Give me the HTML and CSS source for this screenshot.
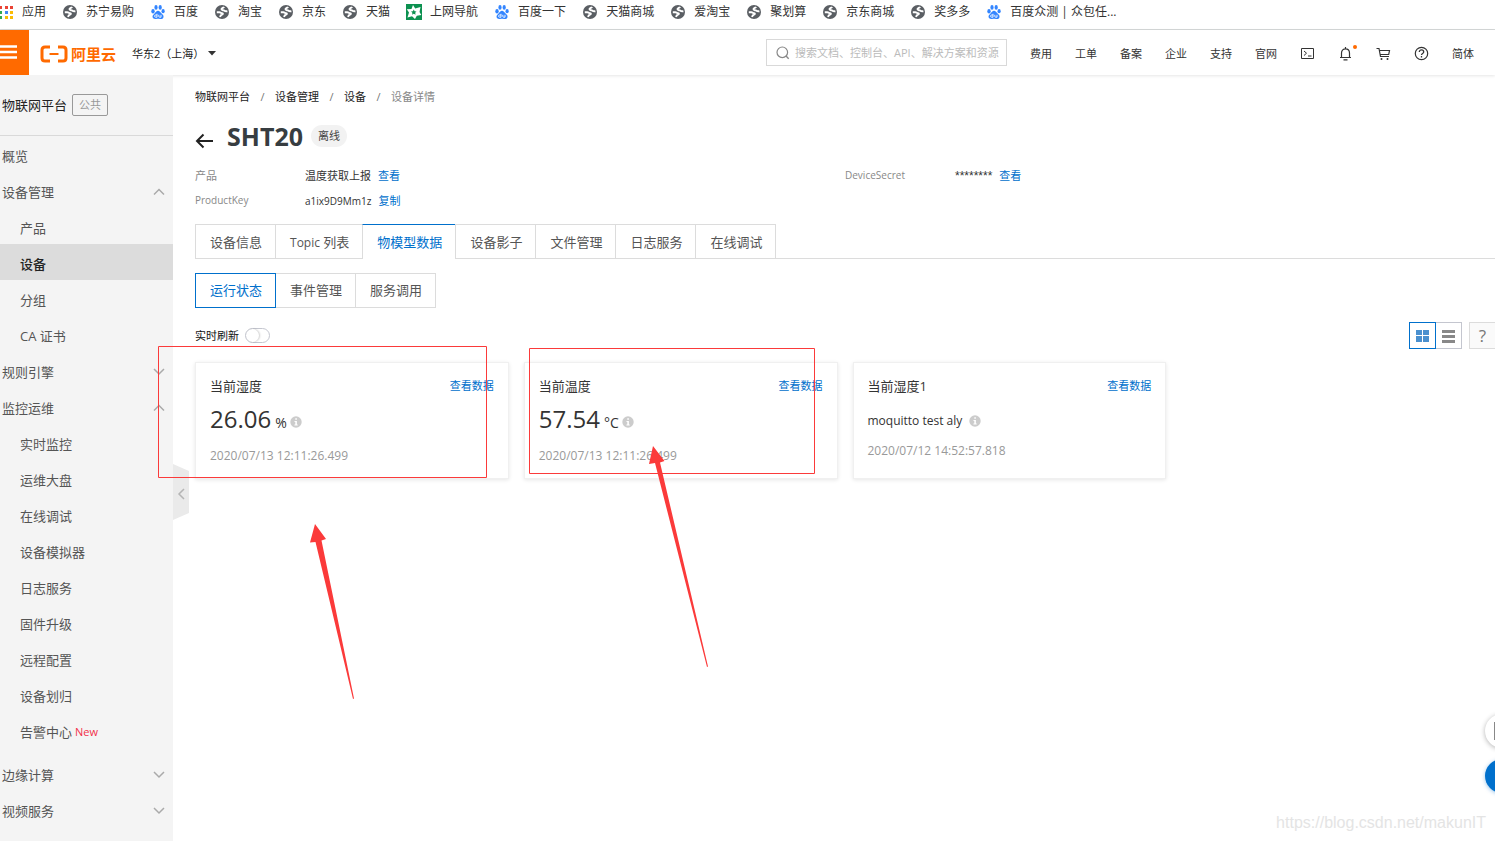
FILE: index.html
```html
<!DOCTYPE html>
<html lang="zh-CN">
<head>
<meta charset="utf-8">
<title>设备详情</title>
<link rel="stylesheet" href="styles.css">
</head>
<body>
<svg class="defs" aria-hidden="true">
  <symbol id="globe" viewBox="0 0 16 16">
    <circle cx="8" cy="8" r="7" fill="#5a5e63"/>
    <path d="M2.800 8.200h2.500c1.400 0 1.400 1 2.700 1.100 1.200.1 1.100 1 .1 1.200-1.100.3-1.500 1-2.200 2.400" fill="none" stroke="#fff" stroke-width="2"/>
    <path d="M10 2.800c-.4 1.100-2.400 1.100-2.500 2.400-.1 1.200 1.800.7 2.600 1.300.9.700 1.400 1.100 3.300.7" fill="none" stroke="#fff" stroke-width="2"/>
  </symbol>
  <symbol id="paw" viewBox="0 0 16 16">
    <g fill="#3385ff">
      <ellipse cx="3" cy="7.200" rx="1.700" ry="2.200"/><ellipse cx="6" cy="3.400" rx="1.600" ry="2.300"/>
      <ellipse cx="10.200" cy="3.400" rx="1.600" ry="2.300"/><ellipse cx="13.100" cy="7.200" rx="1.600" ry="2.100"/>
      <path d="M8 6.800c1.600 0 2.300 1.500 3.600 2.700 1.500 1.300 2.300 2.300 1.800 3.900-.5 1.700-2.200 1.700-3.500 1.500-1.200-.2-2.600-.2-3.800 0-1.400.2-3.100.1-3.500-1.600-.4-1.600.6-2.600 1.900-3.800C5.700 8.300 6.400 6.800 8 6.800z"/>
    </g>
    <path d="M7 9.800v3.400H5.600c-1.400 0-1.400-2.200 0-2.200H7M8.800 10.800v1.500c0 .7.300.9.900.9h1.300v-2.400" fill="none" stroke="#fff" stroke-width=".9"/>
  </symbol>
  <symbol id="info" viewBox="0 0 12 12">
    <circle cx="6" cy="6" r="5.700" fill="#ccc"/>
    <path d="M5.300 2.300h1.600v1.500H5.300zM4.500 4.900h2.400v3.500h.8v1H4.400v-1h.9V5.900h-.8z" fill="#fff"/>
  </symbol>
  <symbol id="down" viewBox="0 0 12 8"><path d="M1 1l5 5 5-5" fill="none" stroke="#aaa" stroke-width="1.500"/></symbol>
  <symbol id="up" viewBox="0 0 12 8"><path d="M1 6.500l5-5 5 5" fill="none" stroke="#aaa" stroke-width="1.500"/></symbol>
</svg>

<nav class="bookmarks" aria-label="书签">
  <a href="#"><svg class="apps" viewBox="0 0 14 16"><path d="M0 2h2v3H0zM5 2h3v3H5zM10 2h3v3h-3z" fill="#ea4335"/><path d="M0 7h2v3H0z" fill="#34a853"/><path d="M5 7h3v3H5z" fill="#4285f4"/><path d="M10 7h3v3h-3z" fill="#fbbc05"/><path d="M0 12h2v3H0z" fill="#34a853"/><path d="M5 12h3v3H5zM10 12h3v3h-3z" fill="#fbbc05"/></svg>应用</a>
  <a href="#"><svg><use href="#globe"/></svg>苏宁易购</a>
  <a href="#"><svg><use href="#paw"/></svg>百度</a>
  <a href="#"><svg><use href="#globe"/></svg>淘宝</a>
  <a href="#"><svg><use href="#globe"/></svg>京东</a>
  <a href="#"><svg><use href="#globe"/></svg>天猫</a>
  <a href="#"><svg viewBox="0 0 16 16"><path d="M0 0h16v16H0z" fill="#0c9150"/><path d="M7 1l2.200 3.600L14.500 3l-1 5 1.800 3-4.500.8L9 15l-3-2.800-4.500 1.300L3 8.500.8 5.200 5.500 5z" fill="#fff"/><path d="M7.800 5.500l.8 1.700 1.900.2-1.300 1.400.4 1.900-1.800-.9-1.700.9.300-1.900L5 7.400l1.900-.2z" fill="#0c9150"/></svg>上网导航</a>
  <a href="#"><svg><use href="#paw"/></svg>百度一下</a>
  <a href="#"><svg><use href="#globe"/></svg>天猫商城</a>
  <a href="#"><svg><use href="#globe"/></svg>爱淘宝</a>
  <a href="#"><svg><use href="#globe"/></svg>聚划算</a>
  <a href="#"><svg><use href="#globe"/></svg>京东商城</a>
  <a href="#"><svg><use href="#globe"/></svg>奖多多</a>
  <a href="#"><svg><use href="#paw"/></svg>百度众测 | 众包任...</a>
</nav>

<header class="topbar">
  <button class="menu" aria-label="菜单"><svg viewBox="0 0 29 45"><path d="M0 16.500h17M0 22h17M0 27.500h17" stroke="#fff" stroke-width="2.400"/></svg></button>
  <a class="logo" href="#"><svg viewBox="0 0 28 18"><path d="M10 2H5Q2 2 2 5v8q0 3 3 3h5M18 2h5q3 0 3 3v8q0 3-3 3h-5" fill="none" stroke="#ff6a00" stroke-width="3"/><path d="M9.500 9h9" stroke="#ff6a00" stroke-width="2"/></svg>阿里云</a>
  <button class="region">华东2（上海）<svg viewBox="0 0 8 5"><path d="M0 0h8L4 4.500z" fill="#333"/></svg></button>
  <label class="search"><svg viewBox="0 0 14 14"><circle cx="6.300" cy="6.300" r="5.300" fill="none" stroke="#888" stroke-width="1.200"/><path d="M10 10l2.700 2.700" stroke="#888" stroke-width="1.400"/></svg><input type="text" aria-label="搜索" placeholder="搜索文档、控制台、API、解决方案和资源"></label>
  <nav class="topnav" aria-label="控制台">
    <a href="#">费用</a><a href="#">工单</a><a href="#">备案</a><a href="#">企业</a><a href="#">支持</a><a href="#">官网</a>
    <button aria-label="云命令行"><svg viewBox="0 0 15 15"><path d="M1.500 2.500h12v10h-12zM4 5l2.500 2.200L4 9.500M8 10h3.500" fill="none" stroke="#333"/></svg></button>
    <button class="bell" aria-label="消息"><svg viewBox="0 0 15 15"><path d="M2 11.500h11M3.500 11.500V7c0-5.500 8-5.500 8 0v4.500M7.500 1v2M5.500 13.800h4" fill="none" stroke="#333" stroke-width="1.200"/></svg><span class="dot"></span></button>
    <button aria-label="购物车"><svg viewBox="0 0 15 15"><path d="M.5 2.500H3l1.500 8h8.500M3.500 4.500h10l-.8 4H4.200" fill="none" stroke="#333" stroke-width="1.200"/><circle cx="5.500" cy="13" r="1" fill="#333"/><circle cx="11.500" cy="13" r="1" fill="#333"/></svg></button>
    <button aria-label="帮助"><svg viewBox="0 0 15 15"><circle cx="7.500" cy="7.500" r="6.200" fill="none" stroke="#333" stroke-width="1.200"/><path d="M5.300 6c0-2.800 4.400-2.800 4.400 0 0 1.500-2.200 1.500-2.200 3M7.500 10v1.400" fill="none" stroke="#333" stroke-width="1.300"/></svg></button>
    <a href="#">简体</a>
  </nav>
</header>

<div class="shell">
  <aside class="sidebar">
    <div class="product">物联网平台<span class="tag">公共</span></div>
    <nav class="side" aria-label="物联网平台">
      <a href="#">概览</a>
      <a href="#">设备管理<svg><use href="#up"/></svg></a>
      <a class="sub" href="#">产品</a>
      <a class="sub current" href="#">设备</a>
      <a class="sub" href="#">分组</a>
      <a class="sub" href="#">CA 证书</a>
      <a href="#">规则引擎<svg><use href="#down"/></svg></a>
      <a href="#">监控运维<svg><use href="#up"/></svg></a>
      <a class="sub" href="#">实时监控</a>
      <a class="sub" href="#">运维大盘</a>
      <a class="sub" href="#">在线调试</a>
      <a class="sub" href="#">设备模拟器</a>
      <a class="sub" href="#">日志服务</a>
      <a class="sub" href="#">固件升级</a>
      <a class="sub" href="#">远程配置</a>
      <a class="sub" href="#">设备划归</a>
      <a class="sub" href="#">告警中心<span class="new">New</span></a>
      <a class="spaced" href="#">边缘计算<svg><use href="#down"/></svg></a>
      <a href="#">视频服务<svg><use href="#down"/></svg></a>
    </nav>
    <button class="collapse" aria-label="收起"><svg viewBox="0 0 16 56"><path d="M0 0l16 7v42L0 56z" fill="#eaeaea"/><path d="M11 25l-5 5 5 5" fill="none" stroke="#b5b5b5" stroke-width="1.500"/></svg></button>
  </aside>

  <main class="content">
    <nav class="crumbs" aria-label="路径"><a href="#">物联网平台</a><i>/</i><a href="#">设备管理</a><i>/</i><a href="#">设备</a><i>/</i><span>设备详情</span></nav>
    <div class="heading">
      <a href="#" aria-label="返回"><svg viewBox="0 0 18 16"><path d="M1.500 8H18M8.500 1.500L2 8l6.500 6.500" fill="none" stroke="#222" stroke-width="2"/></svg></a>
      <h1>SHT20</h1><span class="status">离线</span>
    </div>
    <dl class="details">
      <div><dt>产品</dt><dd>温度获取上报<a href="#">查看</a></dd></div>
      <div><dt class="latin">DeviceSecret</dt><dd><span class="secret">********</span><a href="#">查看</a></dd></div>
      <div><dt class="latin">ProductKey</dt><dd><span class="latin">a1ix9D9Mm1z</span><a href="#">复制</a></dd></div>
    </dl>
    <div class="tabs" role="tablist">
      <button role="tab">设备信息</button><button role="tab"><span class="word">Topic</span> 列表</button><button role="tab" class="on" aria-selected="true">物模型数据</button><button role="tab">设备影子</button><button role="tab">文件管理</button><button role="tab">日志服务</button><button role="tab">在线调试</button>
    </div>
    <div class="subtabs" role="tablist">
      <button role="tab" class="on" aria-selected="true">运行状态</button><button role="tab">事件管理</button><button role="tab">服务调用</button>
    </div>
    <div class="tools">
      <label class="refresh">实时刷新<input type="checkbox" role="switch"></label>
      <div class="views">
        <button class="on" aria-label="卡片"><svg viewBox="0 0 14 14"><path d="M0 1h6v5H0zM7 1h6v5H7zM0 7h6v6H0zM7 7h6v6H7z" fill="#4a90cf"/></svg></button>
        <button aria-label="列表"><svg viewBox="0 0 14 14"><path d="M0 1h13v3H0zM0 6h13v3H0zM0 11h13v3H0z" fill="#888"/></svg></button>
      </div>
      <button class="help">?</button>
    </div>
    <section class="cards">
      <article>
        <header><h2>当前湿度</h2><a href="#">查看数据</a></header>
        <p class="value"><b>26.06</b>%<svg><use href="#info"/></svg></p>
        <time>2020/07/13 12:11:26.499</time>
      </article>
      <article>
        <header><h2>当前温度</h2><a href="#">查看数据</a></header>
        <p class="value"><b>57.54</b>°C<svg><use href="#info"/></svg></p>
        <time>2020/07/13 12:11:26.499</time>
      </article>
      <article>
        <header><h2>当前湿度1</h2><a href="#">查看数据</a></header>
        <p class="value text">moquitto test aly<svg><use href="#info"/></svg></p>
        <time>2020/07/12 14:52:57.818</time>
      </article>
    </section>
  </main>
</div>

<svg class="marks" width="760" height="720" viewBox="0 0 760 720" aria-hidden="true">
  <path d="M158.500 346.500h328v131h-328zM529.500 348.500h285v125h-285z" fill="none" stroke="#fb3a3a"/>
  <path d="M315 524l11 15-4.500 1.500L354 698.500l-1 .5-37.500-157-5.500.5z" fill="#fb3a3a"/>
  <path d="M653 446l11.500 15-4.500 1.500L708 666.500l-1 .5-52-204-6 1z" fill="#fb3a3a"/>
</svg>
<button class="float note" aria-label="反馈"></button>
<button class="float chat" aria-label="咨询"></button>
<div class="watermark">https://blog.csdn.net/makunIT</div>
</body>
</html>
```
FILE: styles.css
```css
* { box-sizing: border-box; }
body {
  margin: 0;
  min-height: 100vh;
  display: flex;
  flex-direction: column;
  position: relative;
  overflow: hidden;
  background: #fff;
  color: #333;
  font: 11px/20px "Open Sans", "Noto Sans CJK SC", sans-serif;
}
a { color: inherit; text-decoration: none; }
button { padding: 0; border: 0; background: none; color: inherit; font: inherit; cursor: pointer; }
svg { display: block; flex: none; }
h1, h2, p, dl, dd { margin: 0; }
.defs { position: absolute; width: 0; height: 0; }

.bookmarks {
  display: flex;
  gap: 16px;
  height: 30px;
  padding-bottom: 6px;
  border-bottom: 1px solid #d5d8d8;
  font-size: 12px;
  white-space: nowrap;
}
.bookmarks a { display: flex; align-items: center; gap: 8px; }
.bookmarks svg { width: 16px; height: 16px; }
.bookmarks .apps { width: 14px; }

.topbar {
  display: flex;
  align-items: center;
  height: 45px;
  position: relative;
  background: #fff;
  box-shadow: 0 1px 3px rgba(0, 0, 0, .1);
  white-space: nowrap;
}
.menu { width: 29px; height: 45px; background: #ff6a00; }
.menu svg { width: 29px; height: 45px; }
.logo {
  display: flex;
  align-items: center;
  gap: 3px;
  margin: 2px 16px 0 11px;
  color: #ff6a00;
  font-size: 15px;
  font-weight: bold;
}
.logo svg { width: 28px; height: 18px; }
.region { display: flex; align-items: center; gap: 4px; padding-top: 2px; color: #222; }
.region svg { width: 8px; height: 5px; }
.search {
  display: flex;
  align-items: center;
  gap: 5px;
  width: 241px;
  height: 27px;
  margin: 0 23px 0 auto;
  padding-left: 9px;
  border: 1px solid #d9d9d9;
}
.search svg { width: 14px; height: 14px; }
.search input { flex: 1; min-width: 0; padding: 0; border: 0; outline: 0; background: none; font: inherit; }
.search input::placeholder { color: #bbb; opacity: 1; }
.topnav { display: flex; align-items: center; gap: 23px; padding: 2px 21px 0 0; }
.topnav svg { width: 15px; height: 15px; }
.bell { position: relative; }
.dot { position: absolute; top: -1px; right: -4px; width: 4px; height: 4px; border-radius: 50%; background: #ff6a00; }

.shell { display: flex; flex: 1; }
.sidebar { position: relative; flex: none; width: 173px; background: #f4f4f4; font-size: 13px; }
.product {
  display: flex;
  align-items: center;
  gap: 5px;
  height: 61px;
  padding-left: 2px;
  border-bottom: 1px solid #d9d9d9;
  color: #222;
}
.tag { padding: 0 6px; border: 1px solid #999; border-radius: 2px; color: #999; font-size: 11px; }
.side { color: #555; line-height: 32px; }
.side a { display: flex; align-items: center; height: 36px; padding: 3px 8px 0 2px; }
.side .sub { padding-left: 20px; }
.side .current { background: #dcdcdc; color: #222; font-weight: 500; }
.side .spaced { margin-top: 7px; }
.side svg { width: 12px; height: 8px; margin-left: auto; }
.new { margin-left: 3px; color: #f2304a; font-size: 11px; }
.collapse { position: absolute; left: 173px; top: 389px; }
.collapse svg { width: 16px; height: 56px; }

.content { flex: 1; min-width: 0; padding: 12px 0 0 22px; }
.crumbs { display: flex; color: #222; }
.crumbs i { width: 25px; text-align: center; font-style: normal; color: #777; }
.crumbs span { color: #888; }
.heading { display: flex; align-items: center; height: 36px; margin-top: 11px; }
.heading svg { width: 18px; height: 16px; margin: 9px 14px 0 0; }
.heading h1 { font-size: 25px; line-height: 36px; color: #373d41; }
.status { margin-left: 8px; padding: 0 7px; border-radius: 11px; background: #f2f2f2; color: #444; line-height: 22px; }
.details { display: grid; grid-template-columns: 1fr 1fr; margin-top: 9px; }
.details div { display: flex; height: 25px; line-height: 25px; }
.details dt { width: 110px; color: #888; }
.details a { margin-left: 7px; }
.details .latin { font-size: 10px; }
.secret { font-family: "Liberation Sans", sans-serif; font-size: 12px; }
.details a, .cards a { color: #0070cc; }

.tabs, .subtabs { display: flex; font-size: 13px; color: #555; white-space: nowrap; }
.tabs { margin-top: 11px; }
.tabs .word { font-size: 12px; line-height: 1; }
.tabs::after { content: ""; flex: 1; border-bottom: 1px solid #dcdcdc; }
.subtabs { margin-top: 14px; }
.tabs button, .subtabs button { height: 35px; padding: 0 13px 0 14px; border: 1px solid #dcdcdc; }
.subtabs button { padding-bottom: 2px; }
.tabs button + button, .subtabs button + button { margin-left: -1px; }
.tabs .on { border-top-color: #0070cc; border-bottom-color: transparent; color: #0070cc; }
.subtabs .on { position: relative; border-color: #0070cc; color: #0070cc; }

.tools { display: flex; align-items: center; height: 27px; margin-top: 14px; }
.refresh { display: flex; align-items: center; gap: 6px; color: #111; }
.refresh input {
  appearance: none;
  width: 25px;
  height: 15px;
  margin: 0;
  border: 1px solid #c4c6cf;
  border-radius: 8px;
}
.refresh input::before {
  content: "";
  display: block;
  width: 13px;
  height: 13px;
  border-radius: 50%;
  box-shadow: 1px 0 2px rgba(0, 0, 0, .2);
}
.views { display: flex; margin: 0 7px 0 auto; }
.views button { display: grid; place-items: center; width: 27px; height: 27px; border: 1px solid #c4c6cf; }
.views button + button { width: 26px; border-left: 0; }
.views .on { border-color: #0070cc; }
.views svg { width: 14px; height: 14px; }
.help { width: 26px; height: 27px; border: 1px solid #dcdcdc; border-right: 0; background: #fafafa; color: #777; font-size: 17px; }

.cards { display: grid; grid-template-columns: repeat(4, minmax(0, 1fr)); gap: 15px; margin-top: 13px; }
.cards article {
  min-height: 117px;
  padding: 13px 14px 12px;
  border: 1px solid #f0f0f0;
  box-shadow: 0 1px 4px rgba(0, 0, 0, .1);
}
.cards header { display: flex; justify-content: space-between; }
.cards h2 { font-size: 13px; line-height: 20px; font-weight: normal; }
.value { display: flex; align-items: baseline; height: 32px; margin-top: 7px; font-size: 14px; line-height: 20px; }
.value b { margin-right: 4px; font-size: 24px; line-height: 32px; font-weight: normal; }
.value svg { width: 12px; height: 12px; margin-left: 3px; }
.value.text { height: 18px; margin-top: 16px; font-size: 12px; line-height: 18px; }
.value.text svg { margin-left: 7px; transform: translateY(2px); }
.cards time { display: block; margin-top: 11px; color: #999; font-size: 12px; }

.marks { position: absolute; left: 0; top: 0; overflow: visible; pointer-events: none; }
.float { position: absolute; right: -24px; width: 34px; height: 34px; border-radius: 50%; }
.note { bottom: 93px; padding-left: 9px; background: #fff; box-shadow: 0 1px 5px rgba(0, 0, 0, .3); }
.note::before { content: ""; display: block; width: 12px; height: 16px; border: 1px solid #888; }
.chat { bottom: 48px; background: #0070cc; box-shadow: 0 1px 4px rgba(0, 112, 204, .4); }
.watermark {
  position: absolute;
  right: 9px;
  bottom: 8px;
  color: #e4e4e4;
  font: 16px/20px "Liberation Sans", sans-serif;
}
```
